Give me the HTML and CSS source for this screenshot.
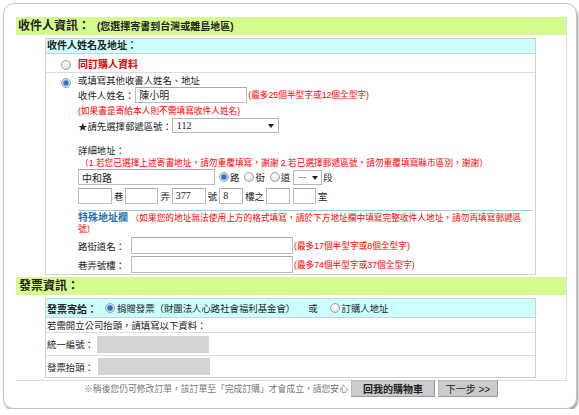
FILE: index.html
```html
<!DOCTYPE html>
<html lang="zh-Hant">
<head>
    <meta charset="UTF-8">
    <title>收件人資訊</title>
    <link rel="stylesheet" href="styles.css">
</head>
<body>
<div class="card">
    <div class="panel">
        <div class="sec-title">收件人資訊：<small>(您選擇寄書到台灣或離島地區)</small></div>
        <div class="box">
            <div class="box-head">收件人姓名及地址：</div>
            <div class="opt opt-same">
                <div class="radio-col"><input type="radio" class="radio" name="rcv"></div>
                <div class="opt-body"><span class="red-bold">同訂購人資料</span></div>
            </div>
            <div class="opt">
                <div class="radio-col"><input type="radio" class="radio top" name="rcv" checked></div>
                <div class="opt-body">
                    <div class="line l-intro">或填寫其他收書人姓名、地址</div>
                    <div class="line l-name">收件人姓名：<input class="txt w-name" value="陳小明"><span class="note">(最多25個半型字或12個全型字)</span></div>
                    <div class="line l-note note">(如果書是寄給本人則不需填寫收件人姓名)</div>
                    <div class="line l-zip">★請先選擇郵遞區號：<span class="sel w-zip">112</span></div>
                    <div class="line l-addr">詳細地址：</div>
                    <div class="line l-note2 note">（1.若您已選擇上述寄書地址，請勿重覆填寫，謝謝 2.若已選擇郵遞區號，請勿重覆填寫縣市區別，謝謝）</div>
                    <div class="line l-road">
                        <input class="txt w-road" value="中和路">
                        <input type="radio" class="radio rd" name="rtype" checked><span>路</span>
                        <input type="radio" class="radio rd" name="rtype"><span>街</span>
                        <input type="radio" class="radio rd" name="rtype"><span>道</span>
                        <span class="sel w-sec">---</span><span>段</span>
                    </div>
                    <div class="line l-num">
                        <input class="txt w34"><span class="unit">巷</span>
                        <input class="txt w33"><span class="unit">弄</span>
                        <input class="txt w34 num" value="377"><span class="unit">號</span>
                        <input class="txt w24 num" value="8"><span class="unit">樓之</span>
                        <input class="txt w24"><input class="txt w23 gap-l"><span class="unit">室</span>
                    </div>
                    <div class="blue-hr"></div>
                    <div class="special"><b class="blue">特殊地址欄</b> <span class="note">（如果您的地址無法使用上方的格式填寫，請於下方地址欄中填寫完整收件人地址，請勿再填寫郵遞區<br>號）</span></div>
                    <div class="line l-street"><span class="lbl">路街道名：</span><input class="txt w-street"><span class="note">(最多17個半型字或8個全型字)</span></div>
                    <div class="line l-street"><span class="lbl">巷弄號樓：</span><input class="txt w-street"><span class="note">(最多74個半型字或37個全型字)</span></div>
                </div>
            </div>
        </div>

        <div class="sec-title sec-2">發票資訊：</div>
        <div class="box">
            <div class="inv-head">
                <b class="head-lbl">發票寄給：</b>
                <input type="radio" class="radio inv-rd" name="inv" checked><span>捐贈發票（財團法人心路社會福利基金會）</span>
                <span class="or">或</span>
                <input type="radio" class="radio inv-rd" name="inv"><span>訂購人地址</span>
            </div>
            <div class="inv-row r-hint">若需開立公司抬頭，請填寫以下資料：</div>
            <div class="inv-row r-field">統一編號：<span class="gray-in"></span></div>
            <div class="inv-row r-field r-last">發票抬頭：<span class="gray-in g2"></span></div>
        </div>
    </div>

    <div class="footer">
        <span class="foot-note">※稍後您仍可修改訂單，該訂單至「完成訂購」才會成立，請您安心</span>
        <button class="btn btn-cart">回我的購物車</button>
        <button class="btn btn-next">下一步 &gt;&gt;</button>
    </div>
</div>
</body>
</html>
```

FILE: styles.css
```css
* {
    box-sizing: border-box;
}
body {
    margin: 0;
    padding: 3px 2px 0 3px;
    font-family: "Liberation Sans", "Noto Sans CJK TC", sans-serif;
    font-size: 9.4px;
    color: #222;
    background: #fff;
}
.card {
    width: 574px;
    height: 406px;
    border: 1px solid #c4c4c4;
    border-radius: 11px;
    box-shadow: 1px 2px 2px #999;
    padding: 13px 10px 0 12px;
}
.panel {
    width: 551px;
    border-right: 1px solid #ddd;
    border-bottom: 1px solid #ddd;
    padding-bottom: 2px;
}
.sec-title {
    width: 550px;
    height: 18px;
    background: #d5fb8e;
    font-size: 12px;
    font-weight: bold;
    line-height: 18px;
    padding-left: 2px;
}
.sec-title small {
    font-size: 10px;
    margin-left: 7px;
}
.sec-2 {
    margin-top: 2px;
    padding-left: 3px;
}
.box {
    margin: 3px 0 0 29px;
    width: 491px;
    border: 1px solid #d0d0d0;
}
.box-head {
    height: 15px;
    background: #ccffff;
    border-bottom: 1px solid #ccd;
    font-size: 10px;
    font-weight: bold;
    line-height: 14px;
    padding-left: 1px;
}
.opt {
    display: flex;
}
.opt-same {
    height: 19px;
    border-bottom: 1px solid #ddd;
    align-items: center;
}
.radio-col {
    width: 32px;
    flex: none;
    padding-left: 15px;
}
.opt-same .radio-col {
    padding-top: 2px;
}
.radio {
    appearance: none;
    -webkit-appearance: none;
    width: 10px;
    height: 10px;
    margin: 0;
    border: 1px solid #a2a2a2;
    border-radius: 50%;
    background: radial-gradient(circle at 40% 35%, #fff 0, #f2f2f2 40%, #cfcfcf 100%);
    vertical-align: middle;
    flex: none;
}
.radio:checked {
    background: radial-gradient(circle, #2d6fd3 0, #2d6fd3 2px, #9fbbe4 3px, #eee 4px);
}
.radio.top {
    margin-top: 5px;
}
.opt-body {
    flex: 1;
    padding: 0 3px 0 0;
}
.red-bold {
    color: #e00000;
    font-weight: bold;
    font-size: 10px;
}
.note {
    color: #f00;
    font-size: 8.7px;
}
.line {
    display: flex;
    align-items: center;
    white-space: nowrap;
}
.l-intro {
    height: 13px;
}
.l-name {
    height: 17px;
}
.l-note {
    height: 14px;
}
.l-zip {
    height: 17px;
}
.l-addr {
    height: 14px;
    margin-top: 9px;
}
.l-note2 {
    height: 11px;
    padding-left: 2px;
}
.l-road {
    height: 18px;
}
.l-num {
    height: 19px;
}
.txt {
    height: 16px;
    margin: 0;
    border: 1px solid #bdbdbd;
    border-top-color: #a8a8a8;
    padding: 0 3px;
    font: inherit;
    font-size: 10px;
    color: #222;
    background: #fff;
}
.w-name {
    width: 112px;
    margin-left: 1px;
    margin-right: 1px;
}
.sel {
    position: relative;
    display: inline-flex;
    align-items: center;
    height: 15px;
    border: 1px solid #b5b5b5;
    padding-left: 4px;
    font-family: "Liberation Serif", "Noto Sans CJK TC", serif;
    font-size: 10px;
    background: #fff;
}
.sel::after {
    content: "";
    position: absolute;
    right: 4px;
    top: 5px;
    border-top: 4px solid #222;
    border-left: 3px solid transparent;
    border-right: 3px solid transparent;
}
.w-zip {
    width: 107px;
}
.w-road {
    width: 137px;
}
.rd {
    margin: 0 1px 0 4px;
}
.rd + span {
    margin-right: 1px;
}
.w-sec {
    width: 29px;
    margin-left: 2px;
    margin-right: 1px;
    font-size: 8px;
    color: #555;
}
.w-sec::after {
    right: 3px;
}
.l-num .txt {
    height: 16px;
}
.w34 {
    width: 34px;
}
.w33 {
    width: 33px;
}
.w24 {
    width: 24px;
}
.w23 {
    width: 23px;
}
.num {
    font-family: "Liberation Serif", serif;
    font-size: 10px;
}
.unit {
    padding: 0 2px;
}
.gap-l {
    margin-left: 3px;
}
.blue-hr {
    height: 1px;
    margin-top: 5px;
    background: #9dcaea;
}
.special {
    padding-top: 2px;
    line-height: 10.5px;
    height: 25px;
}
.blue {
    color: #1f6fb2;
    font-size: 10px;
}
.l-street {
    height: 19px;
}
.lbl {
    width: 53px;
}
.w-street {
    width: 162px;
    height: 17px;
    margin-right: 1px;
}
.inv-head {
    display: flex;
    align-items: center;
    height: 19px;
    background: #ccffff;
    border-bottom: 1px solid #c4d4d4;
    padding-left: 1px;
    white-space: nowrap;
}
.head-lbl {
    font-size: 10px;
    width: 58px;
}
.inv-rd {
    margin-right: 2px;
}
.or {
    margin: 0 12px 0 13px;
}
.inv-row {
    display: flex;
    align-items: center;
    padding-left: 1px;
    border-bottom: 1px solid #ddd;
}
.r-hint {
    height: 15px;
}
.r-field {
    height: 23px;
}
.r-last {
    height: 21px;
    border-bottom: none;
}
.gray-in {
    width: 112px;
    height: 17px;
    margin-left: 3px;
    background: #d4d4d4;
}
.g2 {
    margin-left: 4px;
}
.footer {
    display: flex;
    justify-content: center;
    align-items: center;
    height: 17px;
    margin-top: -1px;
}
.foot-note {
    color: #777;
    font-size: 8.8px;
    margin-right: 3px;
}
.btn {
    height: 17px;
    margin: 0 0 0 3px;
    padding: 0;
    background: #cbcbcb;
    border: 1px solid #bbb;
    border-right-color: #999;
    border-bottom-color: #999;
    font-family: inherit;
    font-size: 10px;
    color: #222;
}
.btn-cart {
    width: 84px;
    font-weight: bold;
    margin-left: 0;
}
.btn-next {
    width: 60px;
}
```
